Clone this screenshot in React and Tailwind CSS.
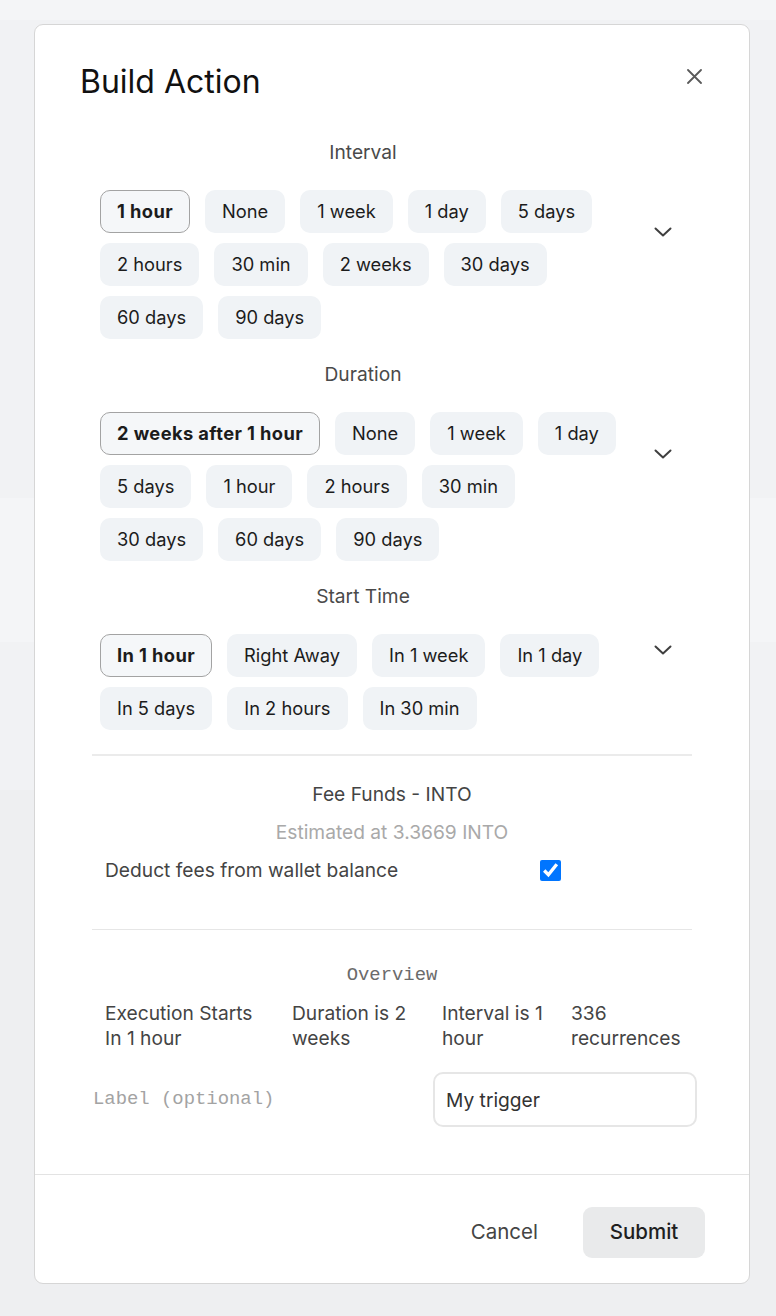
import React, { useState } from "react";

const INTERVALS = ["1 hour", "None", "1 week", "1 day", "5 days", "2 hours", "30 min", "2 weeks", "30 days", "60 days", "90 days"];
const DURATIONS = ["2 weeks after 1 hour", "None", "1 week", "1 day", "5 days", "1 hour", "2 hours", "30 min", "30 days", "60 days", "90 days"];
const STARTS = ["In 1 hour", "Right Away", "In 1 week", "In 1 day", "In 5 days", "In 2 hours", "In 30 min"];

const Chevron = () => (
  <svg width="18" height="10" viewBox="0 0 18 10" fill="none" className="mb-[13px]">
    <path d="M1.5 1.5 L9 8.5 L16.5 1.5" stroke="#3f3f3f" strokeWidth="2" strokeLinecap="round" strokeLinejoin="round" />
  </svg>
);

const ChipSection = ({ label, options, first }) => {
  const [selected, setSelected] = useState(options[0]);

  return (
    <div className={`flex items-center ${first ? "mt-[37px]" : "mt-[22.5px]"}`}>
      <div className="w-[534px] pl-2 shrink-0">
        <p className="text-center text-[19.2px] leading-[27px] text-[#4a4a4a]">{label}</p>
        <div className="flex flex-wrap gap-x-[15px] gap-y-[10px] mt-[23.5px]">
          {options.map((opt) => (
            <button
              key={opt}
              onClick={() => setSelected(opt)}
              className={`px-4 py-[7px] rounded-[10px] border text-[18.3px] leading-[27px] text-[#1c1c1c] ${
                selected === opt
                  ? "bg-[#f5f7f9] border-[#a3a3a3] font-bold tracking-[0.4px]"
                  : "bg-[#f0f3f6] border-transparent"
              }`}
            >
              {opt}
            </button>
          ))}
        </div>
      </div>
      <div className="ml-2 flex-1 flex justify-center">
        <Chevron />
      </div>
    </div>
  );
};

const App = () => {
  const [deduct, setDeduct] = useState(true);
  const [label, setLabel] = useState("My trigger");

  return (
    <div className="relative h-[1316px] w-full overflow-hidden font-['Inter',sans-serif]">
      {/* page behind the overlay */}
      <div className="h-[20px] bg-[#f4f5f7]" />
      <div className="h-[478px] bg-[#f1f2f4]" />
      <div className="h-[144px] bg-[#f4f5f7]" />
      <div className="h-[148px] bg-[#f1f2f4]" />
      <div className="h-[526px] bg-[#eeeff1]" />

      {/* modal */}
      <div className="absolute top-[24px] left-[34px] w-[716px] bg-white border border-[#d6d6d6] rounded-[9px]">
        <div className="flex items-center justify-between pt-[37px] pl-[45px] pr-[47px]">
          <h2 className="text-[32px] leading-[40px] text-[#111]">Build Action</h2>
          <button className="mb-[12px] text-[#555]">
            <svg width="15" height="15" viewBox="0 0 15 15" fill="none">
              <path d="M1 1 L14 14 M14 1 L1 14" stroke="#5a5a5a" strokeWidth="1.8" strokeLinecap="round" />
            </svg>
          </button>
        </div>

        <div className="px-[57px] pb-[47px]">
          <ChipSection label="Interval" options={INTERVALS} first />
          <ChipSection label="Duration" options={DURATIONS} />
          <ChipSection label="Start Time" options={STARTS} />

          <div className="mt-6 border-t-2 border-[#ebebeb]" />

          {/* Fee funds */}
          <p className="mt-[25px] text-center text-[19.2px] leading-[27px] text-[#444]">Fee Funds - INTO</p>
          <p className="mt-[11px] text-center text-[19.2px] leading-[27px] text-[#a9a9a9]">Estimated at 3.3669 INTO</p>
          <div className="mt-[11px] pl-[13px] flex items-center">
            <span className="w-[435px] text-[19.2px] leading-[27px] text-[#444]">Deduct fees from wallet balance</span>
            <input
              type="checkbox"
              checked={deduct}
              onChange={(e) => setDeduct(e.target.checked)}
              className="w-[21px] h-[21px] m-0"
            />
          </div>

          <div className="mt-[45px] border-t border-[#e6e6e6]" />

          {/* Overview */}
          <p className="mt-[32px] text-center font-['Liberation_Mono',monospace] text-[18.9px] leading-[27px] text-[#6b6b6b]">
            Overview
          </p>
          <div className="mt-[12px] pl-[13px] grid grid-cols-[187px_150px_129px_1fr] text-[19.2px] leading-[25px] text-[#444]">
            <div>
              <span className="block">Execution Starts</span>
              <span className="block">In 1 hour</span>
            </div>
            <div>
              <span className="block">Duration is 2</span>
              <span className="block">weeks</span>
            </div>
            <div>
              <span className="block">Interval is 1</span>
              <span className="block">hour</span>
            </div>
            <div>
              <span className="block">336</span>
              <span className="block">recurrences</span>
            </div>
          </div>

          <div className="mt-[21.5px] flex items-center justify-between mr-[-5px]">
            <label className="pl-[1px] font-['Liberation_Mono',monospace] text-[18.9px] text-[#a3a3a3]">
              Label (optional)
            </label>
            <input
              value={label}
              onChange={(e) => setLabel(e.target.value)}
              className="w-[264px] h-[55px] px-[11px] rounded-[10px] border-2 border-[#e6e6e6] text-[19.2px] text-[#333] outline-none"
            />
          </div>
        </div>

        {/* footer */}
        <div className="border-t border-[#e3e3e3] pt-[32px] pb-[25px] pr-[44px] flex items-center justify-end gap-[45px]">
          <button className="text-[20.5px] text-[#444]">Cancel</button>
          <button className="w-[122px] h-[51px] rounded-[9px] bg-[#e9eaeb] text-[20.5px] font-medium text-[#1f1f1f]">
            Submit
          </button>
        </div>
      </div>
    </div>
  );
};

export default App;
